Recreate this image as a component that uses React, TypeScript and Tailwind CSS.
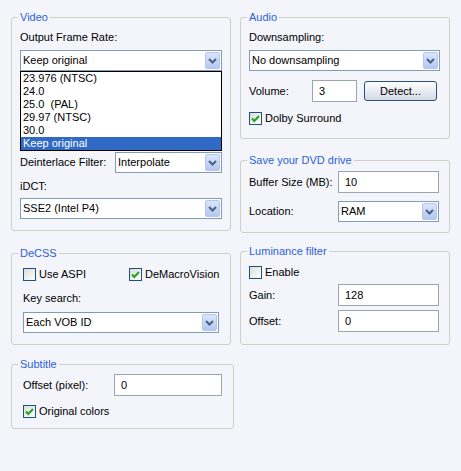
import React from "react";

const Chevron = () => (
  <svg width="9" height="6" viewBox="0 0 9 6">
    <polyline points="1,1 4.5,4.5 8,1" fill="none" stroke="#4d6185" strokeWidth="2" />
  </svg>
);

const Select = ({ value, className = "" }: { value: string; className?: string }) => (
  <div className={`flex h-[21px] items-stretch border border-[#7f9db9] bg-white ${className}`}>
    <span className="flex flex-1 items-center pl-[2px]">{value}</span>
    <div className="m-[1px] flex w-[15px] items-center justify-center rounded-[2px] border border-[#b4c6ee] bg-gradient-to-b from-[#dbe5fc] to-[#b4c7f2]">
      <Chevron />
    </div>
  </div>
);

const Input = ({ value, className = "" }: { value: string; className?: string }) => (
  <div className={`flex h-[22px] items-center border border-[#9aa5b2] bg-white pl-[6px] ${className}`}>{value}</div>
);

const Check = ({ checked }: { checked?: boolean }) => (
  <div className="flex h-[13px] w-[13px] shrink-0 items-center justify-center border border-[#1c5180] bg-gradient-to-br from-[#dcdcd7] to-white">
    {checked && (
      <svg width="11" height="11" viewBox="0 0 11 11">
        <polyline points="2,5.5 4.3,8 9,3" fill="none" stroke="#21a121" strokeWidth="2" />
      </svg>
    )}
  </div>
);

const CheckRow = ({ checked, label, className = "" }: { checked?: boolean; label: string; className?: string }) => (
  <div className={`flex h-[13px] items-center gap-[3px] ${className}`}>
    <Check checked={checked} />
    <span>{label}</span>
  </div>
);

const Group = ({ title, className = "", children }: { title: string; className?: string; children: React.ReactNode }) => (
  <fieldset className={`rounded-[3px] border border-[#d0d0c6] ${className}`}>
    <legend className="ml-[6px] px-[2px] leading-[13px] text-[#2d5fd8]">{title}</legend>
    {children}
  </fieldset>
);

const items = ["23.976 (NTSC)", "24.0", "25.0  (PAL)", "29.97 (NTSC)", "30.0", "Keep original"];

export default function App() {
  return (
    <div className="relative min-h-[471px] w-[461px] bg-[#f3f5fa] font-['Liberation_Sans',Arial,sans-serif] text-[11px] leading-[13px] text-black">
      <div className="flex gap-[9px] pl-[11px] pt-[11px]">
        <div className="flex w-[220px] flex-col">
          <Group title="Video">
            <div className="px-[8px] pb-[11px]">
              <div className="mt-[7px] h-[13px]">Output Frame Rate:</div>
              <div className="relative mt-[6px]">
                <Select value="Keep original" />
                <div className="absolute left-0 right-0 top-full z-10 border border-black bg-white">
                  {items.map((t, i) => (
                    <div
                      key={t}
                      className={`h-[13px] whitespace-pre pl-[2px] ${i === items.length - 1 ? "bg-[#316ac5] text-white" : ""}`}
                    >
                      {t}
                    </div>
                  ))}
                </div>
              </div>
              <div className="mt-[81px] flex items-center">
                <span className="w-[95px]">Deinterlace Filter:</span>
                <Select value="Interpolate" className="w-[107px]" />
              </div>
              <div className="mt-[7px] h-[13px]">iDCT:</div>
              <Select value="SSE2 (Intel P4)" className="mt-[5px]" />
            </div>
          </Group>
          <Group title="DeCSS" className="mt-[16px]">
            <div className="px-[11px] pb-[11px]">
              <div className="mt-[8px] flex">
                <CheckRow label="Use ASPI" className="w-[106px]" />
                <CheckRow checked label="DeMacroVision" />
              </div>
              <div className="mt-[11px] h-[13px]">Key search:</div>
              <Select value="Each VOB ID" className="mt-[7px]" />
            </div>
          </Group>
          <Group title="Subtitle" className="mt-[13px]">
            <div className="px-[11px] pb-[10px]">
              <div className="mt-[3px] flex items-center">
                <span className="w-[91px]">Offset (pixel):</span>
                <Input value="0" className="w-[108px]" />
              </div>
              <CheckRow checked label="Original colors" className="mt-[9px]" />
            </div>
          </Group>
        </div>
        <div className="flex w-[210px] flex-col">
          <Group title="Audio">
            <div className="pl-[8px] pr-[9px] pb-[13px]">
              <div className="mt-[7px] h-[13px]">Downsampling:</div>
              <Select value="No downsampling" className="mt-[6px]" />
              <div className="mt-[9px] flex items-center">
                <span className="w-[63px]">Volume:</span>
                <Input value="3" className="w-[45px]" />
                <button className="ml-[7px] flex h-[20px] w-[73px] items-center justify-center rounded-[3px] border border-[#2d4f7e] bg-gradient-to-b from-white to-[#d3d9e6] text-[11px]">
                  Detect...
                </button>
              </div>
              <CheckRow checked label="Dolby Surround" className="mt-[10px]" />
            </div>
          </Group>
          <Group title="Save your DVD drive" className="mt-[15px]">
            <div className="pl-[8px] pr-[9px] pb-[10px]">
              <div className="mt-[4px] flex items-center">
                <span className="w-[89px]">Buffer Size (MB):</span>
                <Input value="10" className="w-[101px]" />
              </div>
              <div className="mt-[8px] flex items-center">
                <span className="w-[89px]">Location:</span>
                <Select value="RAM" className="w-[101px]" />
              </div>
            </div>
          </Group>
          <Group title="Luminance filter" className="mt-[12px]">
            <div className="pl-[8px] pr-[9px] pb-[12px]">
              <CheckRow label="Enable" className="mt-[8px]" />
              <div className="mt-[5px] flex items-center">
                <span className="w-[89px]">Gain:</span>
                <Input value="128" className="w-[101px]" />
              </div>
              <div className="mt-[4px] flex items-center">
                <span className="w-[89px]">Offset:</span>
                <Input value="0" className="w-[101px]" />
              </div>
            </div>
          </Group>
        </div>
      </div>
    </div>
  );
}
